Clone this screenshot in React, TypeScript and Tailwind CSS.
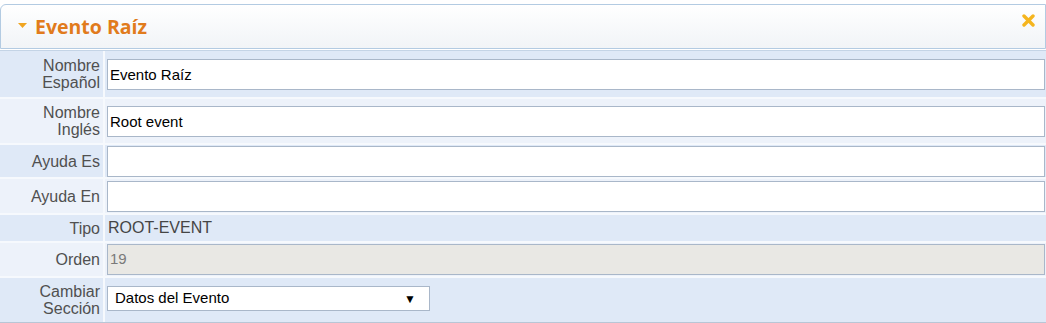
import { ChangeEvent, useState } from 'react'

interface Field {
    label: string[]
    kind: 'input' | 'text' | 'readonly' | 'select'
    value: string
    height: string
}

// heights include the 2px white separator on top (border-box)
const fields: Field[] = [
    { label: ['Nombre', 'Español'], kind: 'input', value: 'Evento Raíz', height: 'h-[46px]' },
    { label: ['Nombre', 'Inglés'], kind: 'input', value: 'Root event', height: 'h-[46px]' },
    { label: ['Ayuda Es'], kind: 'input', value: '', height: 'h-[34px]' },
    { label: ['Ayuda En'], kind: 'input', value: '', height: 'h-[36px]' },
    { label: ['Tipo'], kind: 'text', value: 'ROOT-EVENT', height: 'h-[28px]' },
    { label: ['Orden'], kind: 'readonly', value: '19', height: 'h-[35px]' },
    { label: ['Cambiar', 'Sección'], kind: 'select', value: 'Datos del Evento', height: 'h-[46px]' },
]

function FieldRow({ field, index }: { field: Field; index: number }) {
    const [value, setValue] = useState(field.value)
    const rowBg = index % 2 === 0 ? 'bg-[#dfe9f7]' : 'bg-[#edf2fa]'

    return (
        <div className={`flex ${field.height} ${rowBg} border-t-2 border-[#f6f9fd] first:border-t-0`}>
            <div className="w-[103px] shrink-0 flex flex-col justify-center items-end pr-[3px] text-[16px] leading-[17px] text-[#505050]">
                {field.label.map(line => (
                    <span key={line}>{line}</span>
                ))}
            </div>
            <div className="w-[2px] shrink-0 bg-[#f6f9fd]"></div>
            <div className="flex-1 flex items-center pl-[2px] pr-[1px]">
                {field.kind === 'input' && (
                    <input
                        value={value}
                        onChange={(e: ChangeEvent<HTMLInputElement>) => setValue(e.target.value)}
                        className="w-full h-[31px] bg-white border border-[#a9b7c9] px-[2px] text-[15px] text-black outline-none"
                    />
                )}
                {field.kind === 'text' && (
                    <span className="pl-[1px] text-[16px] text-[#454545]">{field.value}</span>
                )}
                {field.kind === 'readonly' && (
                    <div className="w-full h-[31px] bg-[#e9e8e4] border border-[#a9b7c9] px-[2px] flex items-center text-[15px] text-[#7a7a7a]">
                        {field.value}
                    </div>
                )}
                {field.kind === 'select' && (
                    <div className="w-[323px] h-[25px] mb-[3px] bg-white border border-[#a9b7c9] flex items-center justify-between pl-[7px] pr-[13px] text-[15px] text-black">
                        <span>{field.value}</span>
                        <span className="text-[12px]">▼</span>
                    </div>
                )}
            </div>
        </div>
    )
}

export default function App() {
    return (
        <div className="w-[1046px] h-[323px] bg-white pt-[4px] font-['Liberation_Sans',Arial,sans-serif]">
            {/* Header */}
            <div className="h-[45px] flex items-center justify-between border border-[#b3cbe2] rounded-tl-[6px] bg-gradient-to-b from-white to-[#f1f4f7] pl-[17px] pr-[10px]">
                <div className="flex items-center">
                    <svg width="9" height="6" viewBox="0 0 9 6" className="mr-[8px] mt-[-2px]">
                        <polygon points="0,0 9,0 4.5,5" fill="#f0a521" />
                    </svg>
                    <span className="font-['Open_Sans',sans-serif] font-bold text-[19.5px] text-[#e17b1c]">Evento Raíz</span>
                </div>
                <svg width="13" height="13" viewBox="0 0 13 13" className="mt-[-12px]">
                    <path d="M2 2 L11 11 M11 2 L2 11" stroke="#f5b51e" strokeWidth="3.4" strokeLinecap="round" />
                </svg>
            </div>

            {/* Fields */}
            <div className="mt-[1px] border-t border-[#c4d4e6] border-b-2 border-b-[#b8c6d6]">
                {fields.map((field, i) => (
                    <FieldRow key={field.label.join(' ')} field={field} index={i} />
                ))}
            </div>
        </div>
    )
}
